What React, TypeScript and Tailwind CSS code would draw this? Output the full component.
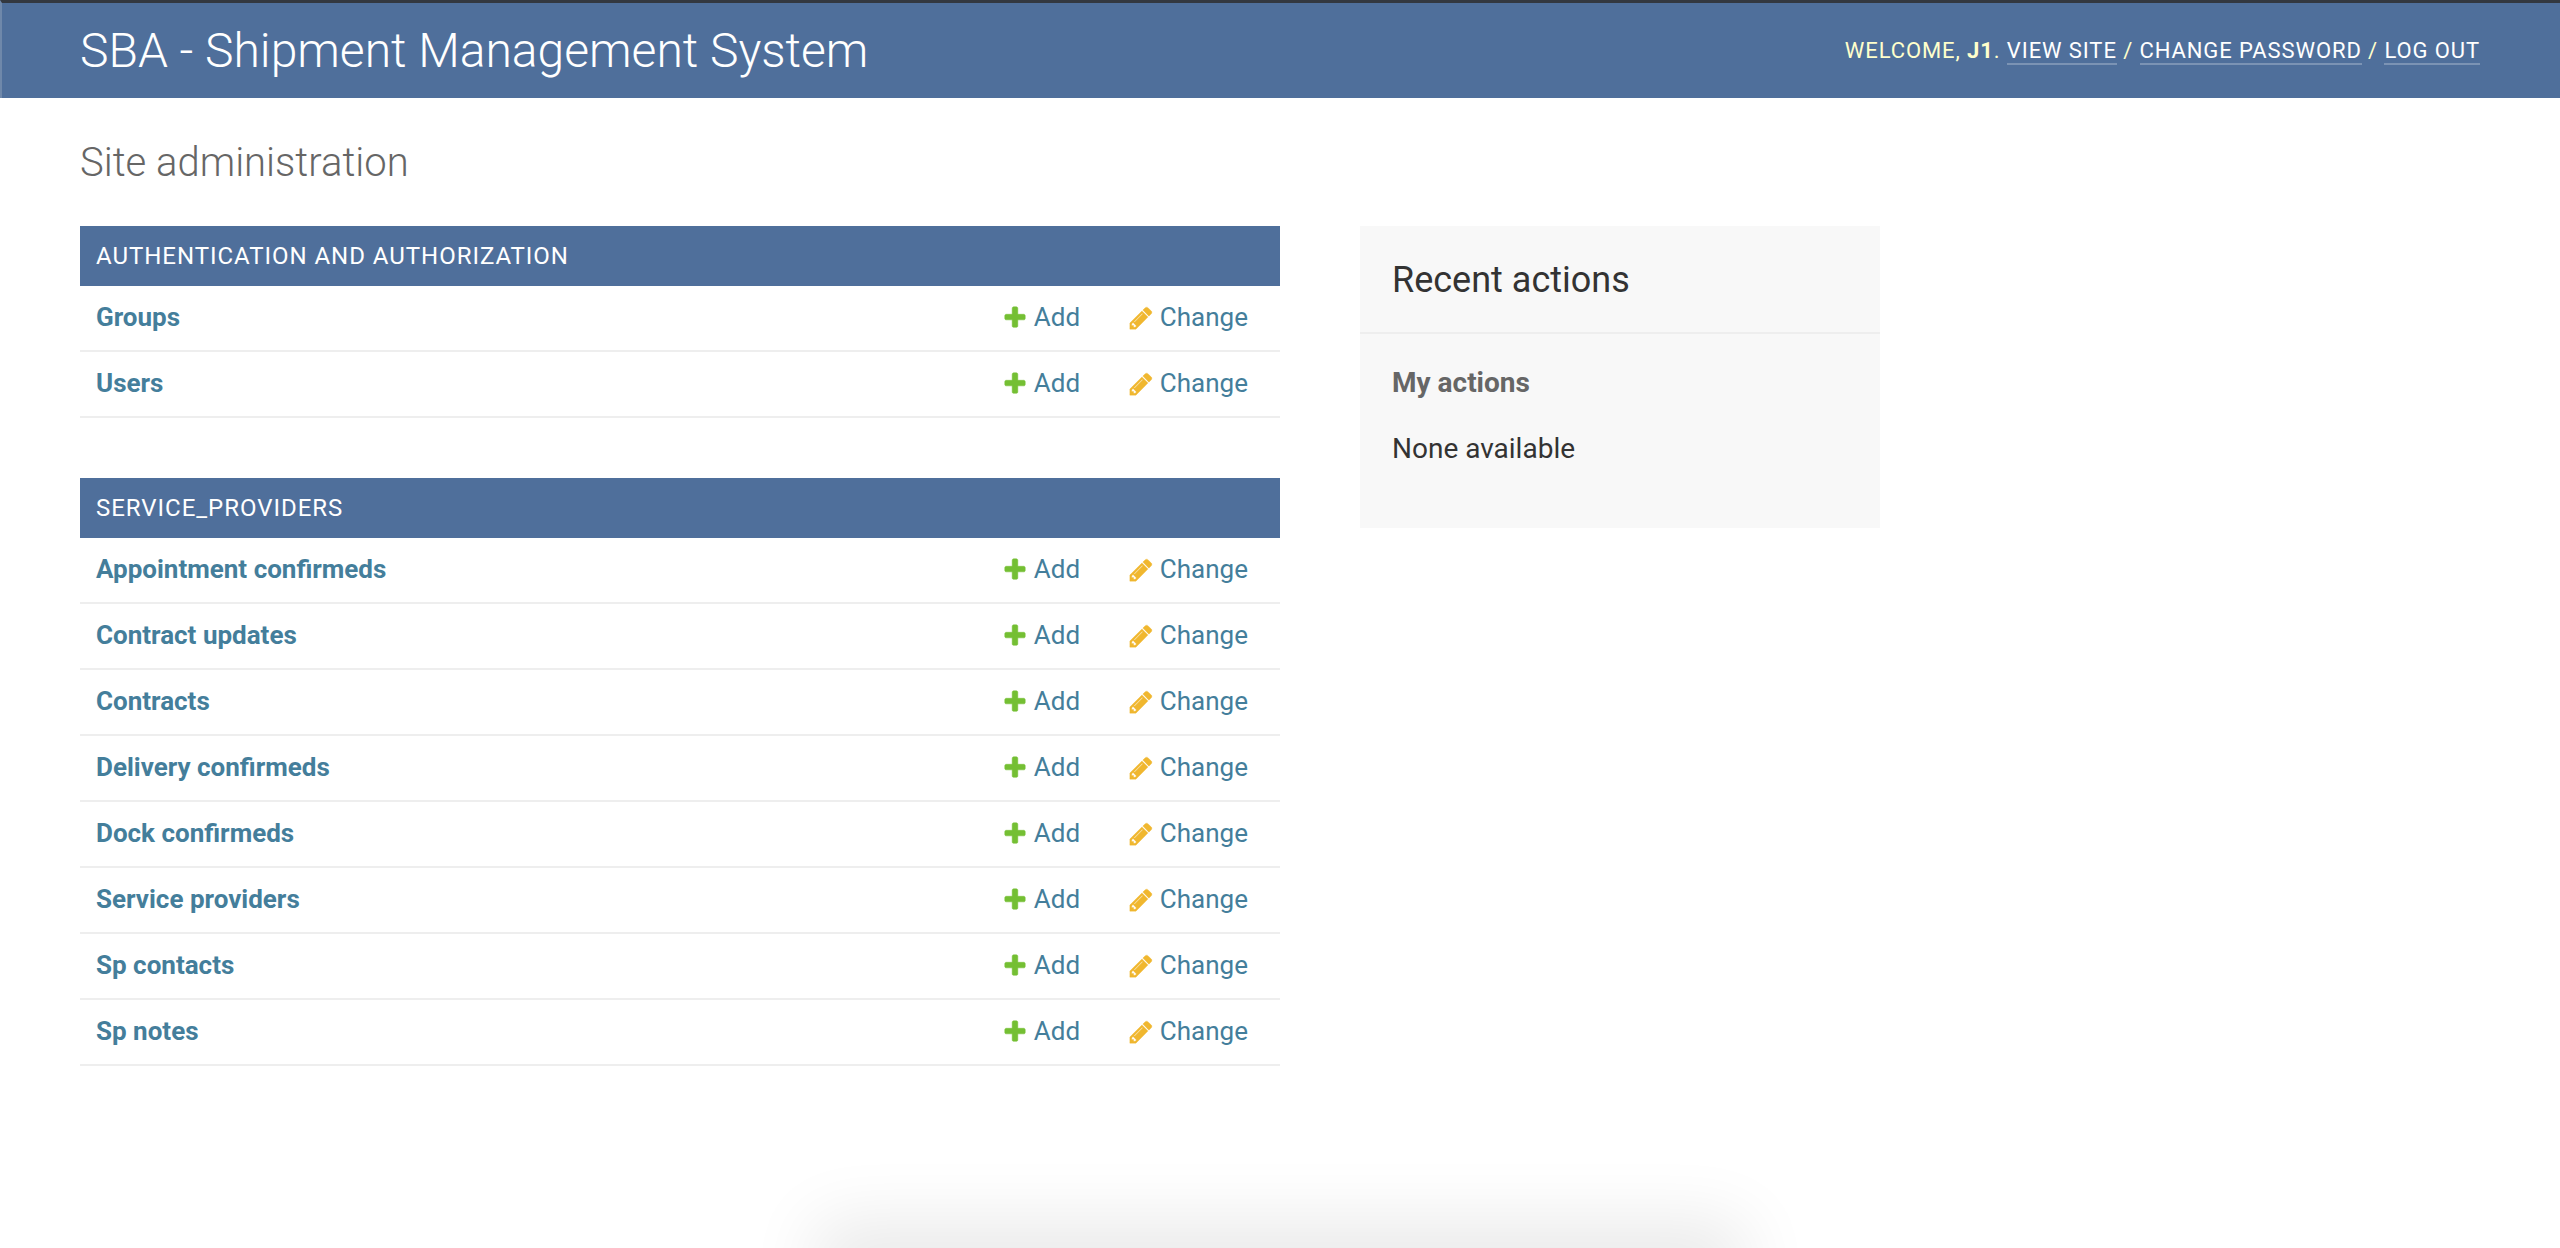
const PlusIcon = () => (
  <svg width="26" height="26" viewBox="0 0 1792 1792" className="shrink-0 translate-y-px">
    <path fill="#74bf33" stroke="#74bf33" strokeWidth="36" strokeLinejoin="round" d="M1600 736v192q0 40-28 68t-68 28h-416v416q0 40-28 68t-68 28h-192q-40 0-68-28t-28-68v-416h-416q-40 0-68-28t-28-68v-192q0-40 28-68t68-28h416v-416q0-40 28-68t68-28h192q40 0 68 28t28 68v416h416q40 0 68 28t28 68z" />
  </svg>
);

const PencilIcon = () => (
  <svg width="26" height="26" viewBox="0 0 1792 1792" className="shrink-0 translate-y-px">
    <path fill="#f0b72f" stroke="#f0b72f" strokeWidth="24" strokeLinejoin="round" d="M491 1536l91-91-235-235-91 91v107h128v128h107zm523-928q0-22-22-22-10 0-17 7l-542 542q-7 7-7 17 0 22 22 22 10 0 17-7l542-542q7-7 7-17zm-54-192l416 416-832 832h-416v-416zm683 96q0 53-37 90l-166 166-416-416 166-165q36-38 90-38 53 0 91 38l235 234q37 39 37 91z" />
  </svg>
);

const Row = ({ name }: { name: string }) => (
  <div className="flex h-[66px] items-center border-b-2 border-[#eeeeee] pb-0.5 pl-4 pr-8 text-[26px] text-[#447e9b]">
    <span className="flex-1 font-bold">{name}</span>
    <span className="flex w-[95px] items-center gap-1.5">
      <PlusIcon />
      Add
    </span>
    <span className="ml-[31px] flex items-center gap-1.5">
      <PencilIcon />
      Change
    </span>
  </div>
);

const Section = ({ title, rows }: { title: string; rows: string[] }) => (
  <section className="mb-[60px]">
    <div className="flex h-[60px] items-center bg-[#4f6f9b] pl-4 text-[24px] tracking-[0.97px] text-white uppercase">
      {title}
    </div>
    {rows.map((r) => (
      <Row key={r} name={r} />
    ))}
  </section>
);

const ToolLink = ({ children }: { children: string }) => (
  <a className="border-b-2 border-white/25 text-white">{children}</a>
);

export default function App() {
  return (
    <div className="relative h-[1248px] overflow-hidden bg-white font-['Roboto',sans-serif] text-[#333333]">
      <header className="flex h-[98px] items-center justify-between border-t-[3px] border-l-2 border-t-[#333840] border-l-[#6f88aa] bg-[#4f6f9b] pr-20 pl-[78px]">
        <h1 className="text-[48px] font-light text-white">SBA - Shipment Management System</h1>
        <div className="text-[22px] font-normal tracking-[0.9px] whitespace-pre text-[#ffffcc] uppercase">
          Welcome, <strong className="font-bold">J1</strong>. <ToolLink>View site</ToolLink> / <ToolLink>Change password</ToolLink> / <ToolLink>Log out</ToolLink>
        </div>
      </header>
      <main className="px-20">
        <h2 className="mt-[41px] mb-[39px] h-[48px] text-[40px] leading-[48px] font-light text-[#666666]">Site administration</h2>
        <div className="flex items-start gap-20">
          <div className="w-[1200px]">
            <Section title="Authentication and Authorization" rows={["Groups", "Users"]} />
            <Section
              title="Service_Providers"
              rows={[
                "Appointment confirmeds",
                "Contract updates",
                "Contracts",
                "Delivery confirmeds",
                "Dock confirmeds",
                "Service providers",
                "Sp contacts",
                "Sp notes",
              ]}
            />
          </div>
          <aside className="h-[302px] w-[520px] bg-[#f8f8f8]">
            <h3 className="flex h-[108px] items-center border-b-2 border-[#eeeeee] px-8 pt-0.5 text-[36px] text-[#333333]">Recent actions</h3>
            <h4 className="mt-[32px] px-8 text-[28px] leading-[34px] font-bold text-[#666666]">My actions</h4>
            <p className="mt-[32px] px-8 text-[28px] leading-[34px] text-[#333333]">None available</p>
          </aside>
        </div>
      </main>
      <div className="absolute top-[1248px] left-[840px] h-[40px] w-[880px] shadow-[0_-2px_70px_24px_rgba(0,0,0,0.09)]" />
    </div>
  );
}
